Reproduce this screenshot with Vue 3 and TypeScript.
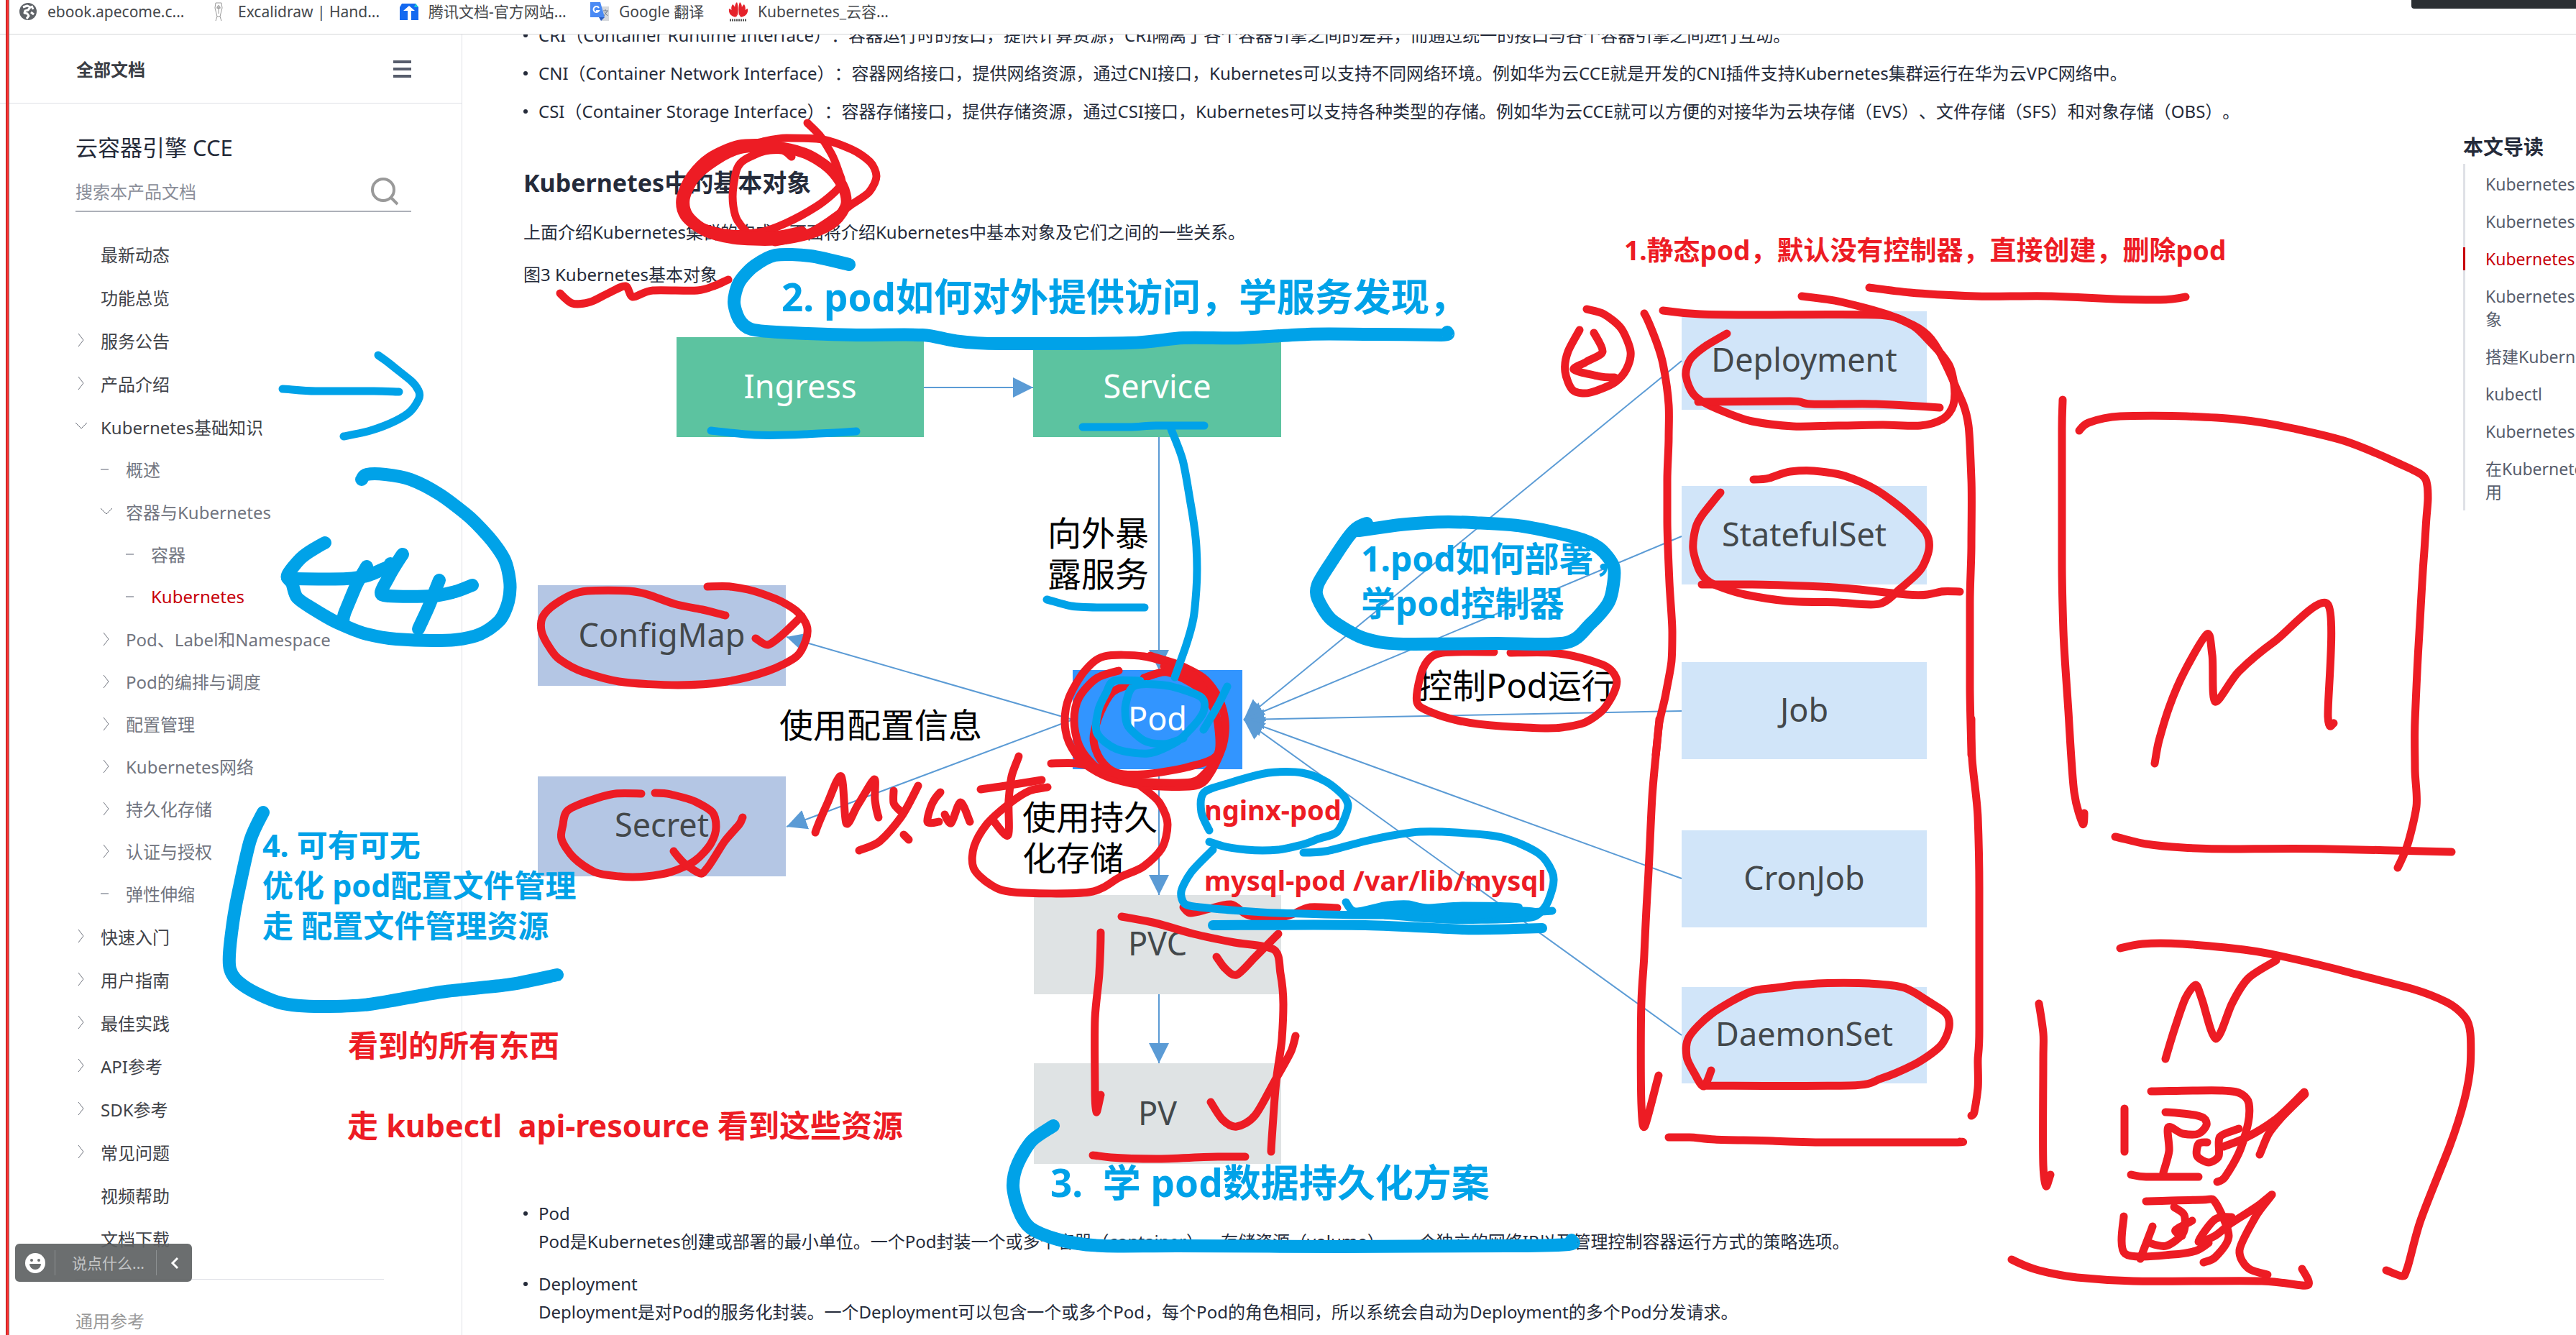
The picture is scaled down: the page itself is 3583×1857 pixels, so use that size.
<script setup lang="ts">
type Point = [number, number]
type Ink = 'red' | 'blue'
interface Stroke { ink: Ink; width: number; d: string }
interface NavItem { label: string; level: 1 | 2 | 3; mark: 'right' | 'down' | 'dash' | 'none'; active?: boolean }
interface DiagramNode { label: string; kind: string; x: number; y: number; w: number; h: number; base: number }
interface Note { text: string; ink: Ink; x: number; y: number; size: number }

const nav: NavItem[] = [
  { label: '最新动态', level: 1, mark: 'none' },
  { label: '功能总览', level: 1, mark: 'none' },
  { label: '服务公告', level: 1, mark: 'right' },
  { label: '产品介绍', level: 1, mark: 'right' },
  { label: 'Kubernetes基础知识', level: 1, mark: 'down' },
  { label: '概述', level: 2, mark: 'dash' },
  { label: '容器与Kubernetes', level: 2, mark: 'down' },
  { label: '容器', level: 3, mark: 'dash' },
  { label: 'Kubernetes', level: 3, mark: 'dash', active: true },
  { label: 'Pod、Label和Namespace', level: 2, mark: 'right' },
  { label: 'Pod的编排与调度', level: 2, mark: 'right' },
  { label: '配置管理', level: 2, mark: 'right' },
  { label: 'Kubernetes网络', level: 2, mark: 'right' },
  { label: '持久化存储', level: 2, mark: 'right' },
  { label: '认证与授权', level: 2, mark: 'right' },
  { label: '弹性伸缩', level: 2, mark: 'dash' },
  { label: '快速入门', level: 1, mark: 'right' },
  { label: '用户指南', level: 1, mark: 'right' },
  { label: '最佳实践', level: 1, mark: 'right' },
  { label: 'API参考', level: 1, mark: 'right' },
  { label: 'SDK参考', level: 1, mark: 'right' },
  { label: '常见问题', level: 1, mark: 'right' },
  { label: '视频帮助', level: 1, mark: 'none' },
  { label: '文档下载', level: 1, mark: 'none' },
]

const toc: { lines: string[]; active?: boolean }[] = [
  { lines: ['Kubernetes'] },
  { lines: ['Kubernetes'] },
  { lines: ['Kubernetes'], active: true },
  { lines: ['Kubernetes', '象'] },
  { lines: ['搭建Kubernetes'] },
  { lines: ['kubectl'] },
  { lines: ['Kubernetes'] },
  { lines: ['在Kubernetes', '用'] },
]

const nodes: DiagramNode[] = [
  { label: 'Ingress', kind: 'net', x: 941, y: 469, w: 344, h: 139, base: 554 },
  { label: 'Service', kind: 'net', x: 1437, y: 469, w: 345, h: 139, base: 554 },
  { label: 'ConfigMap', kind: 'conf', x: 748, y: 814, w: 345, h: 140, base: 900 },
  { label: 'Secret', kind: 'conf', x: 748, y: 1080, w: 345, h: 139, base: 1164 },
  { label: 'Pod', kind: 'pod', x: 1492, y: 932, w: 236, h: 138, base: 1016 },
  { label: 'PVC', kind: 'store', x: 1438, y: 1245, w: 344, h: 138, base: 1329 },
  { label: 'PV', kind: 'store', x: 1438, y: 1479, w: 344, h: 140, base: 1565 },
  { label: 'Deployment', kind: 'ctrl', x: 2339, y: 433, w: 341, h: 137, base: 517 },
  { label: 'StatefulSet', kind: 'ctrl', x: 2339, y: 676, w: 341, h: 137, base: 760 },
  { label: 'Job', kind: 'ctrl', x: 2339, y: 921, w: 341, h: 135, base: 1004 },
  { label: 'CronJob', kind: 'ctrl', x: 2339, y: 1155, w: 341, h: 135, base: 1238 },
  { label: 'DaemonSet', kind: 'ctrl', x: 2339, y: 1373, w: 341, h: 134, base: 1455 },
]

const edges: [number, number, number, number][] = [
  [1285, 539, 1437, 539],
  [1612, 608, 1612, 932],
  [1612, 1070, 1612, 1245],
  [1612, 1383, 1612, 1479],
  [1492, 1001, 1094, 886],
  [1492, 1001, 1094, 1150],
  [2339, 502, 1730, 1001],
  [2339, 746, 1730, 1001],
  [2339, 989, 1730, 1001],
  [2339, 1222, 1730, 1001],
  [2339, 1440, 1730, 1001],
]

const edgeLabels = [
  { text: '向外暴', x: 1457, y: 759 },
  { text: '露服务', x: 1457, y: 816 },
  { text: '使用配置信息', x: 1084, y: 1026 },
  { text: '控制Pod运行', x: 1973, y: 971 },
  { text: '使用持久', x: 1422, y: 1154 },
  { text: '化存储', x: 1422, y: 1211 },
]

const notes: Note[] = [
  { text: '1.静态pod，默认没有控制器，直接创建，删除pod', ink: 'red', x: 2259, y: 362, size: 37 },
  { text: '2. pod如何对外提供访问，学服务发现，', ink: 'blue', x: 1087, y: 433, size: 53 },
  { text: '1.pod如何部署，', ink: 'blue', x: 1893, y: 795, size: 48 },
  { text: '学pod控制器', ink: 'blue', x: 1893, y: 857, size: 48 },
  { text: 'nginx-pod', ink: 'red', x: 1675, y: 1141, size: 38 },
  { text: 'mysql-pod /var/lib/mysql', ink: 'red', x: 1675, y: 1239, size: 38 },
  { text: '4. 可有可无', ink: 'blue', x: 365, y: 1192, size: 43 },
  { text: '优化 pod配置文件管理', ink: 'blue', x: 365, y: 1248, size: 43 },
  { text: '走 配置文件管理资源', ink: 'blue', x: 365, y: 1304, size: 43 },
  { text: '看到的所有东西', ink: 'red', x: 484, y: 1470, size: 42 },
  { text: '走 kubectl  api-resource 看到这些资源', ink: 'red', x: 483, y: 1582, size: 43 },
  { text: '3.  学 pod数据持久化方案', ink: 'blue', x: 1461, y: 1665, size: 53 },
]

/* Catmull-Rom spline through the recorded pen points. */
function smooth(p: Point[]): string {
  let d = `M${p[0][0]} ${p[0][1]}`
  for (let i = 0; i < p.length - 1; i++) {
    const a = p[Math.max(i - 1, 0)]
    const b = p[i]
    const c = p[i + 1]
    const e = p[Math.min(i + 2, p.length - 1)]
    const c1 = [b[0] + (c[0] - a[0]) / 7, b[1] + (c[1] - a[1]) / 7]
    const c2 = [c[0] - (e[0] - b[0]) / 7, c[1] - (e[1] - b[1]) / 7]
    d += `C${c1[0].toFixed(0)} ${c1[1].toFixed(0)} ${c2[0].toFixed(0)} ${c2[1].toFixed(0)} ${c[0]} ${c[1]}`
  }
  return d
}

/* A pad is a part of the board with its own origin and units per axis. */
function pad(ox: number, oy: number, sx: number, sy: number) {
  return (ink: Ink, width: number, ...lines: string[]): Stroke[] =>
    lines.map((line) => ({
      ink,
      width,
      d: smooth(line.trim().split(/\s+/).map((s) => {
        const [x, y] = s.split(',').map(Number)
        return [Math.round(ox + x * sx), Math.round(oy + y * sy)] as Point
      })),
    }))
}

const board = pad(0, 0, 1, 1)
const title = pad(0, 0, 0.829, 0.3333)
const menu = pad(0, 400, 0.5102, 0.4464)
const lowerLeft = pad(0, 1080, 0.829, 0.4955)
const ctrlTop = pad(2150, 150, 0.4783, 0.574)
const ctrlLow = pad(2180, 1000, 0.4464, 0.5466)
const conf = pad(720, 780, 0.4847, 0.3333)
const podArea = pad(1350, 860, 0.5485, 0.3333)
const store = pad(1350, 1240, 0.574, 0.3935)
const sketch = pad(2760, 780, 0.4592, 0.6569)
const deploy = pad(1750, 680, 0.3508, 0.3333)

const strokes: Stroke[] = [
  ...title('red', 11,
    '1355,512 1375,565 1395,640 1408,720 1410,775 1370,860 1320,930 1275,968 1220,975 1175,945',
    '1328,655 1312,628 1280,632 1250,665 1237,705 1230,780 1230,860 1238,920 1252,965',
    '1240,610 1280,592 1320,575 1380,582 1430,625 1460,675 1470,735 1458,800 1425,860 1390,925 1350,980 1300,1012',
    '940,1225 960,1265 990,1260 1020,1225 1050,1195 1062,1240 1095,1213 1170,1212 1200,1190 1222,1168'),
  ...title('red', 15,
    '1300,602 1240,607 1190,660 1160,735 1143,830 1150,900 1180,960 1230,995 1300,1003 1360,975 1400,925 1420,850 1412,770 1390,700 1350,640 1300,612 1240,620 1200,668 1165,742 1148,830 1155,900 1185,960 1240,985 1300,988 1345,965'),
  ...ctrlTop('red', 11,
    '745,457 860,470 990,500 1070,530 1120,570 1170,620 1188,670 1185,720 1155,755 1090,770 980,768 850,770 720,771 600,760 500,730 430,695 408,650 420,610 460,580 527,547',
    '340,492 450,500 620,502 960,502 1050,520 1110,550 1150,600 1190,670 1215,720 1230,770 1237,900 1237,1060 1233,1200 1233,1400 1238,1568',
    '286,498 310,540 340,620 357,720 357,800 353,900 353,1000 360,1150 367,1270 366,1340 350,1420 330,1490 320,1568',
    '443,712 710,710 770,718 960,718 1145,727',
    '120,488 170,500 220,535 247,590 235,635 200,665 130,690 80,685 57,640 65,590 98,538',
    '140,545 165,590 120,615 82,634 150,650 200,653',
    '605,900 650,897 710,882 780,880 870,892 960,925 1050,980 1105,1030 1115,1070 1090,1120 1030,1165 970,1202 850,1198 700,1195 580,1180 490,1155 450,1125 428,1070 440,1010 470,970 508,932',
    '453,1155 600,1155 800,1160 950,1170 1050,1180 1110,1180 1150,1173 1205,1173'),
  ...ctrlLow('red', 11,
    '1258,0 1262,100 1280,250 1283,430 1283,790 1279,870 1279,940 1268,1000 1258,1010',
    '287,0 265,200 250,420 240,600 230,720 230,980 242,1035 285,908',
    '315,1065 380,1065 460,1070 640,1073 820,1077 1200,1077 1222,1075',
    '447,895 425,935 400,910 372,860 378,810 450,750 570,695 650,685 780,673 940,673 1050,685 1130,720 1180,750 1190,785 1160,835 1080,880 980,915 880,933 430,933'),
  ...board('red', 11,
    '2600,400 2657,407 2748,412 2853,412 2940,416 3005,417 3040,413',
    '2869,556 2868,597 2868,720 2868,780 2870,878 2877,990 2885,1102 2897,1146 2899,1131',
    '2892,599 2905,588 2949,579 3041,579 3108,583 3190,596 3266,615 3333,643 3369,661 3376,675 3377,693 3375,720 3371,780 3364,898 3359,1003 3359,1069 3361,1122 3348,1177 3335,1207'),
  ...sketch('red', 11,
    '397,584 490,600 600,608 750,610 1040,610 1415,616',
    '516,430 530,380 560,310 610,230 675,155 690,200 700,298 770,235 880,170 1040,93 1040,330 1058,344',
    '412,820 480,812 600,811 750,820 900,838 1100,870 1300,907 1400,935 1455,965 1473,1000 1473,1070 1455,1140 1410,1240 1320,1400 1280,1500 1265,1515 1217,1503',
    '166,938 178,1000 178,1060 178,1280 188,1325 200,1300',
    '548,1055 580,985 610,925 640,898 660,930 702,1012 750,940 800,885 885,847',
    '505,1123 720,1122 780,1130 801,1150 800,1190 770,1255 730,1305 705,1315',
    '424,1160 424,1252',
    '548,1167 620,1172 665,1180 672,1195 650,1213 600,1213 558,1200 560,1250 543,1295',
    '445,1300 490,1304 650,1304',
    '675,1232 650,1235 645,1260 680,1274 710,1260 715,1220 770,1203',
    '725,1240 790,1222 880,1185 970,1125',
    '835,1258 860,1215 900,1180 972,1130',
    '490,1356 660,1353 700,1358 740,1430 700,1475 665,1486',
    '422,1388 427,1468 570,1469 640,1462 680,1445',
    '510,1410 473,1478',
    '575,1368 605,1385 600,1425 550,1450 500,1445',
    '630,1398 580,1418 598,1430',
    '750,1390 700,1395 650,1442 700,1430 750,1402 830,1365 872,1343 820,1390 773,1460 800,1498 857,1512',
    '82,1480 150,1500 280,1518 450,1525 840,1525 978,1535 962,1500'),
  ...conf('red', 11,
    '597,228 530,205 450,180 380,145 320,127 200,126 150,145 95,195 70,240 68,290 90,360 120,410 190,465 290,505 460,518 600,505 720,460 800,400 828,330 830,270 800,210 740,160 660,120 610,108 545,108',
    '683,323 718,350 760,310 815,230',
    '355,973 280,973 210,1000 145,1040 130,1100 125,1160 160,1240 220,1300 290,1318 370,1318 440,1300 510,1250 555,1180 570,1110 560,1050 510,1005 440,975 395,968',
    '447,1213 480,1265 525,1305 545,1280 590,1180 635,1100 645,1070',
    '855,1135 890,1010 928,900 943,1095 975,1020 1023,912 1025,1000 1035,1070',
    '1078,960 1080,1010 1095,1040',
    '1150,940 1100,1070 1040,1170 980,1210',
    '1108,1143 1123,1165',
    '1213,965 1190,1010 1175,1090 1210,1088',
    '1225,1060 1245,1095 1270,1008 1298,1090',
    '1438,815 1418,900 1410,1000 1408,1145 1365,1085',
    '1328,955 1400,940 1505,915'),
  ...podArea('red', 11,
    '195,705 150,720 100,770 40,860 10,950 8,1040 50,1110 110,1142 300,1142 380,1080 440,1035 485,960 500,860 480,770 430,700',
    '455,155 520,190 590,250 630,340 645,430 640,530 610,640 570,700 450,700 360,670 290,610 250,520 238,430 250,330 290,220 340,160 440,160 520,195',
    '375,220 320,250 275,330 262,430 275,530 310,610 370,670 450,685 560,685 600,640 630,570',
    '440,250 500,225 580,290 610,360 628,440 625,570 550,620 440,652 370,645 330,590 312,500 330,390 360,310 400,280',
    '205,605 270,605 320,625 380,655',
    '490,200 560,250 600,300 625,350',
    '500,215 560,235 590,290',
    '540,1205 557,1230 600,1215 660,1195 700,1235 760,1258 810,1240 860,1205 930,1210'),
  ...deploy('red', 11,
    '935,680 730,683 670,720 640,790 630,890 680,930 800,970 960,990 1150,998 1280,980 1360,930 1410,850 1420,790 1380,740 1280,705 1160,685 1000,684'),
  ...store('red', 11,
    '365,88 440,110 540,150 640,180 735,205 750,290 757,400 755,520 742,650 733,800 728,920',
    '315,145 312,290 302,450 302,700 305,780 315,720',
    '595,232 615,270 645,295 690,230 745,150',
    '582,745 610,805 645,830 690,790 740,660 775,570 787,510',
    '297,932 340,940 450,945 600,937 665,937'),
  ...board('blue', 18,
    '1181,368 1127,356 1078,355 1049,370 1028,393 1021,420 1028,444 1045,458 1100,463 1200,466 1283,466 1328,474 1391,478 1570,477 1646,470 1729,470 1819,465 1908,465 2005,466 2013,462'),
  ...board('blue', 11,
    '1629,597 1645,640 1656,700 1664,760 1664,820 1660,860 1649,900 1634,942',
    '1506,594 1570,594 1608,592 1675,592',
    '989,599 1050,605 1120,604 1191,600',
    '1456,834 1490,843 1540,845 1592,845'),
  ...menu('blue', 11,
    '770,316 860,322 1020,322 1088,324',
    '1030,210 1060,235 1120,290 1140,320 1140,350 1120,385 1080,415 1010,445 937,463'),
  ...menu('blue', 18,
    '985,597 1000,582 1050,582 1120,597 1200,645 1270,705 1330,775 1375,850 1390,915 1385,980 1360,1040 1310,1080 1240,1098 1180,1100 1080,1095 1000,1080 920,1045 850,1000 810,965 795,920 784,895 820,845 855,815 886,795',
    '784,900 800,908 945,908 1000,898 1060,870 1065,860',
    '1000,870 970,930 940,1010 935,1045',
    '1097,830 1060,900 1038,950 1060,960 1180,960 1240,948 1287,928',
    '1197,912 1170,990 1140,1065'),
  ...lowerLeft('blue', 18,
    '442,100 420,180 400,320 388,440 386,540 410,590 470,635 540,645 620,640 740,605 850,585 935,557'),
  ...deploy('blue', 18,
    '430,145 380,175 300,290 237,400 237,460 290,545 400,615 480,640 620,648 950,645 1220,643 1320,560 1390,470 1408,400 1408,320 1350,245 1250,200 1050,155 850,141 670,141 540,152 400,175'),
  ...podArea('blue', 11,
    '605,885 585,810 590,730 650,690 755,645 840,645 900,680 950,750 955,800 930,890 880,920 840,945 780,965 700,965 640,950 605,933',
    '845,978 900,972 1000,930 1120,893 1230,893 1350,915 1440,980 1475,1060 1475,1130 1455,1210 1430,1245 1380,1255 1200,1258 1050,1240',
    '615,965 560,1060 535,1140 545,1195 600,1210 780,1230 1000,1238 1300,1235 1475,1222',
    '952,1185 975,1225 1060,1198 1110,1195 1160,1210 1250,1200 1390,1205 1300,1235 1150,1250',
    '1000,1225 1200,1220 1400,1220 1440,1230',
    '430,260 365,260 345,310 325,380 320,480 370,545 450,565 520,520 560,460 590,390 585,330 510,285 430,275 405,300 392,380 400,450 440,510 490,525 540,500',
    '650,285 625,370 590,465'),
  ...podArea('blue', 14, '615,1282 1000,1282 1250,1298 1450,1292'),
  ...store('blue', 18,
    '200,828 150,880 115,960 103,1040 115,1120 145,1190 210,1230 320,1252 500,1252 900,1255 1300,1253 1450,1247 1457,1232'),
]
</script>

<template>
  <div class="page" lang="zh-CN">
    <header class="bookmarks">
      <a class="bookmark" href="#">
        <svg class="fav" viewBox="0 0 28 28"><circle cx="14" cy="14" r="12" fill="#5f6368" /><path d="M7 8l6-2 4 2-3 4-4 1-1 3 4 1 2 3-3 4M19 6l2 5M18 15l4 3" fill="none" stroke="#fff" stroke-width="3" stroke-linejoin="round" /></svg>
        ebook.apecome.c...
      </a>
      <a class="bookmark" href="#">
        <svg class="fav" viewBox="0 0 28 28"><path d="M10 2h8l1 7-3 12h-4L9 9zM12 21l-2 6M16 21l2 6M14 5v12M11 9h6" fill="none" stroke="#999" stroke-width="1" /><circle cx="14" cy="8" r="2" fill="none" stroke="#999" /></svg>
        Excalidraw | Hand...
      </a>
      <a class="bookmark" href="#">
        <svg class="fav" viewBox="0 0 28 28"><path d="M4 3h19l4 5v18H1V8z" fill="#1469f0" /><path d="M23 3l4 5h-6z" fill="#19c6d8" /><path d="M14 6l8 7h-5v13h-5V13H6z" fill="#fff" /></svg>
        腾讯文档-官方网站...
      </a>
      <a class="bookmark" href="#">
        <svg class="fav" viewBox="0 0 28 28"><path d="M11 7h16v20H16z" fill="#d5d8dc" /><path d="M1 1h14l6 21H1z" fill="#4a8af4" /><path d="M13 22h8l-5 5z" fill="#3060c0" /><path d="M13 9a4 4 0 1 0 0 4h-4" fill="none" stroke="#fff" stroke-width="2" /><path d="M19 13h7M22 11v2M25 13l-5 7M21 15l4 5" fill="none" stroke="#6f7b8a" /></svg>
        Google 翻译
      </a>
      <a class="bookmark" href="#">
        <svg class="fav" viewBox="0 0 28 28"><g fill="#e5222a"><path d="M13 20C8 12 8 4 12 1c2 4 2 12 1 19zM15 20c5-8 5-16 1-19-2 4-2 12-1 19zM12 21C5 17 2 10 6 4c4 3 6 10 6 17zM16 21c7-4 10-11 6-17-4 3-6 10-6 17zM11 22C4 21 0 17 1 10c5 2 8 6 10 12zM17 22c7-1 11-5 10-12-5 2-8 6-10 12z" /></g><path d="M2 26h24" stroke="#555" stroke-width="3" stroke-dasharray="2 1" /></svg>
        Kubernetes_云容...
      </a>
    </header>

    <div class="columns">
      <aside class="sidebar">
        <div class="all-docs">
          <strong>全部文档</strong>
          <button class="burger" aria-label="菜单"><i></i><i></i><i></i></button>
        </div>
        <h1 class="product">云容器引擎 CCE</h1>
        <label class="search">
          <input type="text" placeholder="搜索本产品文档" aria-label="搜索本产品文档" />
          <svg width="38" height="42" viewBox="0 0 38 42"><circle cx="17" cy="19" r="15" /><path d="M28 30l9 9" /></svg>
        </label>
        <nav>
          <ul class="nav">
            <li v-for="item in nav" :key="item.label" :class="['level-' + item.level, { active: item.active }]">
              <span class="mark">
                <svg v-if="item.mark === 'right'" width="16" height="20" viewBox="0 0 16 20"><path d="M4 1l7 9-7 9" /></svg>
                <svg v-else-if="item.mark === 'down'" width="16" height="20" viewBox="0 0 16 20"><path d="M0 5l8 8 8-8" /></svg>
                <i v-else-if="item.mark === 'dash'" class="dash"></i>
              </span>
              <a href="#">{{ item.label }}</a>
            </li>
          </ul>
        </nav>
        <div class="more">通用参考</div>
      </aside>

      <main class="article">
        <ul class="bullets">
          <li>CRI（Container Runtime Interface）：容器运行时的接口，提供计算资源，CRI隔离了各个容器引擎之间的差异，而通过统一的接口与各个容器引擎之间进行互动。</li>
          <li>CNI（Container Network Interface）：容器网络接口，提供网络资源，通过CNI接口，Kubernetes可以支持不同网络环境。例如华为云CCE就是开发的CNI插件支持Kubernetes集群运行在华为云VPC网络中。</li>
          <li>CSI（Container Storage Interface）：容器存储接口，提供存储资源，通过CSI接口，Kubernetes可以支持各种类型的存储。例如华为云CCE就可以方便的对接华为云块存储（EVS）、文件存储（SFS）和对象存储（OBS）。</li>
        </ul>
        <h2>Kubernetes中的基本对象</h2>
        <p class="intro">上面介绍Kubernetes集群的构成，下面将介绍Kubernetes中基本对象及它们之间的一些关系。</p>
        <figure>
          <figcaption>图3 Kubernetes基本对象</figcaption>
          <svg class="diagram" width="1960" height="1266" viewBox="728 402 1960 1266">
            <defs>
              <marker id="tip" markerUnits="userSpaceOnUse" markerWidth="28" markerHeight="28" refX="28" refY="14" orient="auto">
                <path d="M0 0L28 14L0 28z" fill="#5b9bd5" />
              </marker>
            </defs>
            <g v-for="n in nodes" :key="n.label" :class="n.kind">
              <rect :x="n.x" :y="n.y" :width="n.w" :height="n.h" />
              <text class="node-text" :x="n.x + n.w / 2" :y="n.base">{{ n.label }}</text>
            </g>
            <line v-for="(e, i) in edges" :key="i" class="edge" :x1="e[0]" :y1="e[1]" :x2="e[2]" :y2="e[3]" marker-end="url(#tip)" />
            <text v-for="l in edgeLabels" :key="l.text" class="edge-text" :x="l.x" :y="l.y">{{ l.text }}</text>
          </svg>
        </figure>
        <ul class="bullets terms">
          <li>Pod<p>Pod是Kubernetes创建或部署的最小单位。一个Pod封装一个或多个容器（container）、存储资源（volume）、一个独立的网络IP以及管理控制容器运行方式的策略选项。</p></li>
          <li>Deployment<p>Deployment是对Pod的服务化封装。一个Deployment可以包含一个或多个Pod，每个Pod的角色相同，所以系统会自动为Deployment的多个Pod分发请求。</p></li>
        </ul>
      </main>

      <aside class="toc">
        <h3>本文导读</h3>
        <ul>
          <li v-for="(t, i) in toc" :key="i" :class="{ active: t.active }">
            <a href="#"><span v-for="line in t.lines" :key="line">{{ line }}</span></a>
          </li>
        </ul>
      </aside>
    </div>

    <div class="share-edge"></div>
    <div class="meeting-tab"></div>

    <div class="chat">
      <button class="smile" aria-label="表情">
        <svg width="28" height="28" viewBox="0 0 28 28"><circle cx="14" cy="14" r="14" fill="#fff" /><circle cx="9" cy="10" r="2" fill="#6b6f70" /><circle cx="19" cy="10" r="2" fill="#6b6f70" /><path d="M6 15h16a8 8 0 0 1-16 0z" fill="#6b6f70" /></svg>
      </button>
      <input type="text" placeholder="说点什么..." aria-label="说点什么" />
      <button class="fold" aria-label="收起">
        <svg width="12" height="18" viewBox="0 0 12 18"><path d="M10 2L3 9l7 7" fill="none" stroke="#fff" stroke-width="3" /></svg>
      </button>
    </div>

    <svg class="ink">
      <text v-for="n in notes" :key="n.text" :class="n.ink" :x="n.x" :y="n.y" :font-size="n.size">{{ n.text }}</text>
      <path v-for="(s, i) in strokes" :key="i" :class="s.ink" :d="s.d" :stroke-width="s.width" />
    </svg>
  </div>
</template>

<style>
body {
  margin: 0;
  background: #fff;
}
</style>

<style scoped>
.page {
  position: relative;
  height: 100vh;
  overflow: hidden;
  display: flex;
  flex-direction: column;
  background: #fff;
  color: #252b3a;
  font-family: "Noto Sans", "Noto Sans CJK SC", sans-serif;
  font-size: 24px;
  text-spacing-trim: space-all;
  font-feature-settings: "chws" 0, "halt" 0;
}
a { color: inherit; text-decoration: none; }
ul { list-style: none; margin: 0; padding: 0; }
button { border: 0; padding: 0; background: none; }
input { border: 0; padding: 0; background: none; font: inherit; outline: 0; min-width: 0; }

.bookmarks {
  flex: none;
  height: 47px;
  box-sizing: content-box;
  border-bottom: 1px solid #d6d7d9;
  display: flex;
  align-items: flex-start;
  gap: 38px;
  padding-left: 25px;
  font-size: 21px;
  line-height: 32px;
  color: #45484c;
}
.bookmark {
  display: flex;
  align-items: center;
  gap: 13px;
  width: 227px;
  white-space: nowrap;
}
.bookmark:nth-child(4) { width: 155px; }
.fav { width: 28px; height: 28px; flex: none; }

.columns { flex: 1; display: flex; min-height: 0; }

.sidebar {
  flex: none;
  width: 642px;
  border-right: 1px solid #dfe1e6;
  overflow: hidden;
}
.all-docs {
  height: 95px;
  border-bottom: 1px solid #dfe1e6;
  display: flex;
  align-items: center;
  justify-content: space-between;
  padding: 0 70px 0 106px;
  color: #3a3d44;
}
.burger {
  display: flex;
  flex-direction: column;
  justify-content: space-between;
  width: 25px;
  height: 24px;
}
.burger i { height: 4px; background: #575d6c; }
.product {
  margin: 41px 0 0 105px;
  font-size: 31px;
  line-height: 40px;
  font-weight: 400;
}
.search {
  margin: 14px 70px 0 105px;
  height: 54px;
  border-bottom: 2px solid #adb0b8;
  display: flex;
  align-items: center;
  padding-right: 18px;
}
.search input { flex: 1; height: 40px; }
.search input::placeholder { color: #8a8e99; opacity: 1; }
.search svg { fill: none; stroke: #999; stroke-width: 4; }

.nav { padding-top: 28px; }
.nav li {
  display: flex;
  align-items: center;
  height: 60px;
  padding-left: 105px;
  color: #3f4248;
  white-space: nowrap;
}
.nav li.level-2, .nav li.level-3 { height: 59px; color: #71757f; }
.nav li.level-2 { padding-left: 140px; }
.nav li.level-3 { padding-left: 175px; }
.nav li.level-3.active { color: #c7000b; }
.mark { width: 35px; display: flex; }
.mark svg { fill: none; stroke: #71757f; stroke-width: 1; }
.dash { width: 11px; height: 2px; background: #adb0b8; }
.more {
  margin: 27px 108px 0 105px;
  padding-top: 38px;
  border-top: 1px solid #dfe1e6;
  line-height: 40px;
  color: #999;
}

.article {
  flex: 1;
  min-width: 0;
  padding-left: 85px;
  overflow: hidden;
  white-space: nowrap;
}
.bullets { margin-top: -26px; }
.bullets li {
  position: relative;
  padding-left: 21px;
  line-height: 53px;
}
.bullets li::before {
  content: "";
  position: absolute;
  left: 0;
  top: 24px;
  width: 6px;
  height: 6px;
  border-radius: 50%;
  background: #252b3a;
}
h2 {
  margin: 49px 0 0;
  font-size: 34px;
  line-height: 48px;
}
.intro { margin: 25px 0 19px; line-height: 40px; }
figure { margin: 0; }
figcaption { line-height: 40px; }
.diagram { display: block; }
.terms { margin-top: 0; }
.terms li { line-height: 39px; margin-bottom: 20px; }
.terms li::before { top: 17px; }
.terms p { margin: 0; }

.net rect { fill: #5cc3a0; }
.conf rect { fill: #b4c6e4; }
.pod rect { fill: #3295ff; }
.store rect { fill: #dfe3e4; }
.ctrl rect { fill: #d1e5f9; }
.node-text { font-size: 45px; text-anchor: middle; fill: #43484b; }
.net .node-text, .pod .node-text { fill: #fff; }
.edge { stroke: #5b9bd5; stroke-width: 2; }
.edge-text { font-size: 47px; fill: #000; }

.toc {
  flex: none;
  width: 157px;
  overflow: hidden;
  white-space: nowrap;
}
.toc h3 {
  margin: 136px 0 0;
  font-size: 28px;
  line-height: 40px;
}
.toc ul {
  margin-top: 4px;
  padding: 12px 0 10px;
  border-left: 3px solid #dfe1e6;
  display: flex;
  flex-direction: column;
  gap: 20px;
  font-size: 23px;
  line-height: 32px;
  color: #575d6c;
}
.toc li { margin-left: -3px; padding-left: 31px; }
.toc li.active { color: #c7000b; box-shadow: inset 3px 0 0 #c7000b; }
.toc span { display: block; }

.share-edge {
  position: absolute;
  left: 8px;
  top: 0;
  bottom: 0;
  width: 3px;
  background: #ff3333;
  border-left: 1px solid #a01818;
  border-right: 1px solid #777;
}
.meeting-tab {
  position: absolute;
  right: 0;
  top: 0;
  width: 229px;
  height: 12px;
  background: #2b2f33;
  border-bottom-left-radius: 4px;
}
.chat {
  position: absolute;
  left: 21px;
  bottom: 74px;
  width: 246px;
  height: 53px;
  border-radius: 6px;
  background: rgba(94, 98, 99, 0.92);
  display: flex;
  align-items: center;
  font-size: 21px;
  color: #fff;
}
.smile { width: 56px; height: 35px; border-right: 1px solid #8c9091; display: flex; align-items: center; justify-content: center; }
.chat input { flex: 1; width: 100px; height: 36px; padding-left: 23px; color: #fff; }
.chat input::placeholder { color: #c3c5c6; opacity: 1; }
.fold { width: 50px; height: 35px; border-left: 1px solid #8c9091; display: flex; align-items: center; justify-content: center; }

.ink {
  position: absolute;
  left: 0;
  top: 0;
  width: 100%;
  height: 100%;
  pointer-events: none;
}
.ink text { font-weight: 700; white-space: pre; }
.ink path { fill: none; stroke-linecap: round; stroke-linejoin: round; }
.ink text.red { fill: #ed1c24; }
.ink text.blue { fill: #00a2e8; }
.ink path.red { stroke: #ed1c24; }
.ink path.blue { stroke: #00a2e8; }
</style>
